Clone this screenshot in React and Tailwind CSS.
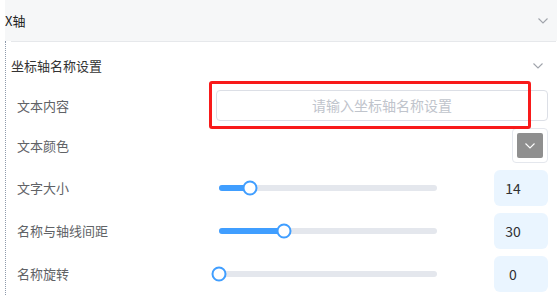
const SLIDERS = [
  { label: "文字大小", value: 14 },
  { label: "名称与轴线间距", value: 30 },
  { label: "名称旋转", value: 0 },
];

function Chevron({ className, color = "#a0a4ab" }) {
  return (
    <svg className={className} width="10" height="6" viewBox="0 0 10 6" fill="none">
      <polyline points="0.5,0.5 5,5 9.5,0.5" stroke={color} strokeWidth="1.1" />
    </svg>
  );
}

function SliderRow({ label, value }) {
  const pct = value / 100;
  return (
    <div className="flex items-center h-[36px]">
      <div className="w-[199px] text-[13px] text-[#606266]">{label}</div>
      <div className="relative ml-[3px] w-[218px] h-[6px] rounded-full bg-[#e4e7ed]">
        <div
          className="absolute left-0 top-0 h-[6px] rounded-full bg-[#409eff]"
          style={{ width: `${pct * 100}%` }}
        />
        <div
          className="absolute top-1/2 w-[15px] h-[15px] -translate-x-1/2 -translate-y-1/2 rounded-full border-2 border-[#409eff] bg-white"
          style={{ left: `${pct * 100}%` }}
        />
      </div>
      <div className="ml-auto w-[54px] h-[36px] rounded-[6px] bg-[#eaf5ff] flex items-center">
        <span className="w-[38px] text-center text-[14px] text-[#303133]">{value}</span>
      </div>
    </div>
  );
}

export default function App() {
  return (
    <div
      className="relative w-[560px] h-[306px] overflow-hidden bg-white pl-[5px]"
      style={{ fontFamily: '"Noto Sans CJK SC", "Noto Sans", sans-serif' }}
    >
      <div className="w-[552px] h-[41px] bg-[#f6f7f8] flex items-center justify-between pr-[9px]">
        <span className="text-[13px] text-[#222]">X轴</span>
        <Chevron />
      </div>

      <div className="border-l border-dotted border-[#8e9aab] pl-[5px] pb-[3px] mt-[2px]">
        <div className="w-[545px] border-t border-[#e6e8eb] -mt-[2px] pr-[8px]">
          <div className="h-[48px] flex items-center justify-between pr-[5px]">
            <span className="text-[13px] text-[#333]">坐标轴名称设置</span>
            <Chevron />
          </div>

          <div className="flex flex-col gap-[7px] pl-[6px]">
            <div className="flex items-center h-[31px]">
              <div className="w-[199px] text-[13px] text-[#606266]">文本内容</div>
              <div className="flex-1 h-[31px] rounded-[4px] border border-[#dcdfe6] flex items-center justify-center text-[14px] text-[#c0c4cc]">
                请输入坐标轴名称设置
              </div>
            </div>

            <div className="flex items-center h-[35px]">
              <div className="w-[199px] text-[13px] text-[#606266]">文本颜色</div>
              <div className="ml-auto w-[36px] h-[35px] rounded-[4px] border border-[#e4e7ed] flex items-center justify-center">
                <div className="w-[26px] h-[25px] rounded-[2px] bg-[#8f8f8f] flex items-center justify-center">
                  <Chevron color="#ffffff" />
                </div>
              </div>
            </div>

            {SLIDERS.map((s) => (
              <SliderRow key={s.label} label={s.label} value={s.value} />
            ))}
          </div>
        </div>
      </div>

      <div className="absolute left-[209px] top-[81px] w-[322px] h-[48px] border-[3px] border-[#f81a1a] rounded-[3px]" />
    </div>
  );
}
